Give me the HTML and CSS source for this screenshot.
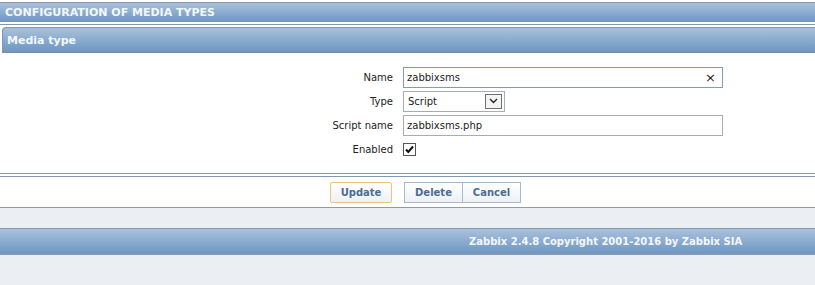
FILE: index.html
```html
<!DOCTYPE html>
<html lang="en">
<head>
  <meta charset="UTF-8">
  <title>Configuration of media types</title>
  <link rel="stylesheet" href="styles.css">
</head>
<body>
  <div class="top">
    <div class="page-title">CONFIGURATION OF MEDIA TYPES</div>
    <div class="sep"></div>
    <div class="box-title">Media type</div>

    <form class="form" onsubmit="return false">
      <div class="row">
        <label>Name</label>
        <div class="input name-input">
          <span>zabbixsms</span>
          <span class="clear">&#215;</span>
        </div>
      </div>
      <div class="row">
        <label>Type</label>
        <div class="select">
          <span>Script</span>
          <span class="arrow">
            <svg width="9" height="6" viewBox="0 0 9 6"><path d="M1 1 L4.5 4.5 L8 1" fill="none" stroke="#222" stroke-width="1.4"/></svg>
          </span>
        </div>
      </div>
      <div class="row">
        <label>Script name</label>
        <div class="input">zabbixsms.php</div>
      </div>
      <div class="row">
        <label>Enabled</label>
        <span class="check">
          <svg width="11" height="11" viewBox="0 0 11 11"><path d="M2 5.5 L4.3 8 L9 2.5" fill="none" stroke="#111" stroke-width="2"/></svg>
        </span>
      </div>
    </form>

    <div class="actions">
      <button class="btn main">Update</button>
      <div class="group">
        <button class="btn">Delete</button>
        <button class="btn">Cancel</button>
      </div>
    </div>
  </div>

  <div class="footer">Zabbix 2.4.8 Copyright 2001-2016 by Zabbix SIA</div>
</body>
</html>
```

FILE: styles.css
```css
body { margin: 0; background: #ebeef2; font-family: "DejaVu Sans", Verdana, sans-serif; font-size: 10px; color: #222; }
.top { background: #fff; padding-top: 2px; border-bottom: 1px solid #8d9aaa; }

.page-title, .box-title, .footer {
  background: linear-gradient(#a9c1db, #7ea3ca 70%, #7195c0);
  color: #f4f7fa; font-weight: bold;
}
.page-title { height: 19px; line-height: 19px; padding-left: 5px; font-size: 11px; border-top: 1px solid #8797ab; }
.sep { height: 1px; background: #8797ab; margin: 2px 0; }
.box-title { margin-left: 2px; height: 24px; line-height: 25px; padding-left: 4px; font-size: 11px; border-top: 1px solid #8797ab; border-left: 1px solid #8797ab; border-radius: 4px 0 0 0; border-bottom: 1px solid #7a8da6; }

.form { padding: 14px 0 12px; border-bottom: 1px solid #8797ab; }
.row { display: flex; align-items: center; height: 20px; margin-bottom: 4px; }
.row:nth-child(4) { margin-top: 2px; margin-bottom: 2px; }
.row label { width: 403px; text-align: right; padding-right: 10px; box-sizing: border-box; }
.input { box-sizing: border-box; width: 320px; height: 21px; border: 1px solid #a5acb5; padding: 0 3px; line-height: 20px; display: flex; justify-content: space-between; }
.name-input { border-color: #7f9db9; }
.clear { font-size: 13px; padding-right: 3px; }
.select { box-sizing: border-box; width: 102px; height: 21px; border: 1px solid #a5acb5; padding: 0 2px 0 4px; display: flex; align-items: center; justify-content: space-between; }
.arrow { width: 15px; height: 13px; border: 1px solid #707070; display: flex; align-items: center; justify-content: center; background: #f4f4f4; }
.check { width: 11px; height: 11px; border: 1px solid #555; display: flex; }

.actions { border-top: 1px solid #8797ab; margin-top: 2px; height: 30px; display: flex; justify-content: center; align-items: center; gap: 12px; padding-left: 36px; }
.btn { font-family: "DejaVu Sans", Verdana, sans-serif; font-weight: bold; font-size: 10px; color: #4c6d94; background: linear-gradient(#fff, #edf1f5); border: 1px solid #a9b8ca; height: 21px; padding: 0; cursor: pointer; }
.btn.main { border-color: #f0c27a; border-radius: 2px; width: 62px; }
.group { display: flex; }
.group .btn { width: 59px; }
.group .btn + .btn { margin-left: -1px; }

.footer { margin-top: 20px; height: 25px; line-height: 25px; font-size: 10px; border-top: 1px solid #8797ab; border-bottom: 1px solid #8d9db2; padding-left: 469px; }
```
